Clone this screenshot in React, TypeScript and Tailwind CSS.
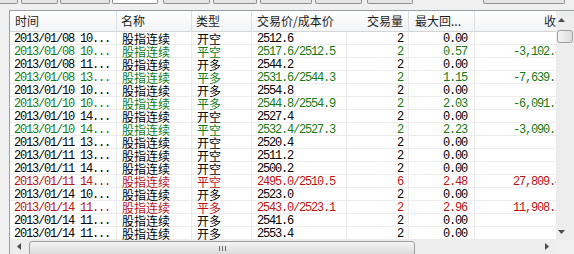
import React from 'react';

type Tone = 'k' | 'g' | 'r';

interface Trade {
  t: string;
  kind: string;
  price: string;
  vol: string;
  dd: string;
  pnl: string;
  c: Tone;
}

const trades: Trade[] = [
  { t: '2013/01/08 10...', kind: '开空', price: '2512.6', vol: '2', dd: '0.00', pnl: '', c: 'k' },
  { t: '2013/01/08 10...', kind: '平空', price: '2517.6/2512.5', vol: '2', dd: '0.57', pnl: '-3,102.40', c: 'g' },
  { t: '2013/01/08 11...', kind: '开多', price: '2544.2', vol: '2', dd: '0.00', pnl: '', c: 'k' },
  { t: '2013/01/08 13...', kind: '平多', price: '2531.6/2544.3', vol: '2', dd: '1.15', pnl: '-7,639.20', c: 'g' },
  { t: '2013/01/10 10...', kind: '开多', price: '2554.8', vol: '2', dd: '0.00', pnl: '', c: 'k' },
  { t: '2013/01/10 10...', kind: '平多', price: '2544.8/2554.9', vol: '2', dd: '2.03', pnl: '-6,091.60', c: 'g' },
  { t: '2013/01/10 14...', kind: '开空', price: '2527.4', vol: '2', dd: '0.00', pnl: '', c: 'k' },
  { t: '2013/01/10 14...', kind: '平空', price: '2532.4/2527.3', vol: '2', dd: '2.23', pnl: '-3,090.80', c: 'g' },
  { t: '2013/01/11 13...', kind: '开空', price: '2520.4', vol: '2', dd: '0.00', pnl: '', c: 'k' },
  { t: '2013/01/11 13...', kind: '开空', price: '2511.2', vol: '2', dd: '0.00', pnl: '', c: 'k' },
  { t: '2013/01/11 14...', kind: '开空', price: '2500.2', vol: '2', dd: '0.00', pnl: '', c: 'k' },
  { t: '2013/01/11 14...', kind: '平空', price: '2495.0/2510.5', vol: '6', dd: '2.48', pnl: '27,809.40', c: 'r' },
  { t: '2013/01/14 10...', kind: '开多', price: '2523.0', vol: '2', dd: '0.00', pnl: '', c: 'k' },
  { t: '2013/01/14 11...', kind: '平多', price: '2543.0/2523.1', vol: '2', dd: '2.96', pnl: '11,908.20', c: 'r' },
  { t: '2013/01/14 11...', kind: '开多', price: '2541.6', vol: '2', dd: '0.00', pnl: '', c: 'k' },
  { t: '2013/01/14 11...', kind: '开多', price: '2553.4', vol: '2', dd: '0.00', pnl: '', c: 'k' },
];

const toneClass: Record<Tone, string> = {
  k: 'text-black',
  g: 'text-[#147a14]',
  r: 'text-[#b81414]',
};

const mono = "font-['Liberation_Mono',monospace] text-[12px] tracking-[-1.2px] leading-[12px]";
const cjk = "font-['Noto_Sans_CJK_SC',sans-serif] text-[12px] leading-[12px]";

function Arrow({ dir }: { dir: 'up' | 'down' | 'left' | 'right' }) {
  const pts = {
    up: '0,4 7,4 3.5,0',
    down: '0,0 7,0 3.5,4',
    left: '4,0 4,7 0,3.5',
    right: '0,0 0,7 4,3.5',
  }[dir];
  const vert = dir === 'up' || dir === 'down';
  return (
    <svg width={vert ? 7 : 4} height={vert ? 4 : 7} viewBox={vert ? '0 0 7 4' : '0 0 4 7'}>
      <polygon points={pts} fill="#4d4d4d" />
    </svg>
  );
}

function TabStrip() {
  return (
    <div className="flex h-[4px]">
      <div className="w-[18px] h-[4px] border-r border-b border-[#8e8f8f] bg-[#e4e4e4] rounded-br-[2px]" />
      <div className="ml-[3px] w-[37px] h-[4px] border-x border-b border-[#8e8f8f] bg-[#e4e4e4] rounded-b-[2px]" />
      <div className="ml-[2px] w-[50px] h-[4px] border-x border-b border-[#8e8f8f] bg-[#e4e4e4] rounded-b-[2px]" />
      <div className="ml-[2px] w-[46px] h-[4px] border-x border-b border-[#8e8f8f] bg-white rounded-b-[2px]" />
      <div className="ml-[5px] w-[47px] h-[4px] border-x border-b border-[#8e8f8f] bg-[#e4e4e4] rounded-b-[2px]" />
      <div className="ml-[3px] w-[44px] h-[4px] border-x border-b border-[#8e8f8f] bg-[#e4e4e4] rounded-b-[2px]" />
      <div className="ml-[3px] w-[52px] h-[4px] border-x border-b border-[#8e8f8f] bg-[#e4e4e4] rounded-b-[2px]" />
      <div className="ml-[3px] w-[47px] h-[4px] border-x border-b border-[#8e8f8f] bg-[#e4e4e4] rounded-b-[2px]" />
      <div className="ml-[5px] w-[46px] h-[4px] border-x border-b border-[#8e8f8f] bg-[#e4e4e4] rounded-b-[2px]" />
      <div className="ml-[70px] w-[82px] h-[4px] border-x border-b border-[#8e8f8f] bg-[#e4e4e4] rounded-b-[2px]" />
    </div>
  );
}

function Header() {
  const cell = "flex items-center border-r border-[#dcdfe3] shrink-0";
  return (
    <div className={`flex h-[21px] border-b border-[#d5d5d5] bg-linear-to-b from-white to-[#f3f4f6] text-[#1e1e1e] ${cjk}`}>
      <div className={`${cell} w-[107px] pl-[5px]`}>时间</div>
      <div className={`${cell} w-[75px] pl-[4px]`}>名称</div>
      <div className={`${cell} w-[60px] pl-[4px]`}>类型</div>
      <div className="flex items-center shrink-0 w-[95px] pl-[5px]">交易价/成本价</div>
      <div className={`${cell} w-[62px] justify-end pr-[5px]`}>交易量</div>
      <div className={`${cell} w-[66px] pl-[6px]`}>最大回...</div>
      <div className="flex items-center shrink-0 w-[99px] justify-end pr-[6px]">收益</div>
    </div>
  );
}

function TradeRow({ r }: { r: Trade }) {
  const cell = "flex items-center pt-[2px] border-r border-[#ececec] shrink-0 whitespace-nowrap";
  return (
    <div className={`flex h-[13px] border-b border-[#ececec] ${toneClass[r.c]}`}>
      <div className={`${cell} w-[107px] pl-[4px] ${mono}`}>{r.t}</div>
      <div className={`${cell} w-[75px] pl-[5px] ${cjk}`}>股指连续</div>
      <div className={`${cell} w-[60px] pl-[5px] ${cjk}`}>{r.kind}</div>
      <div className={`${cell} w-[95px] pl-[5px] ${mono}`}>{r.price}</div>
      <div className={`${cell} w-[62px] justify-end pr-[5px] ${mono}`}>{r.vol}</div>
      <div className={`${cell} w-[66px] justify-end pr-[7px] ${mono}`}>{r.dd}</div>
      <div className={`${cell} w-[99px] justify-end pr-[6px] ${mono}`}>{r.pnl}</div>
    </div>
  );
}

function VScroll() {
  return (
    <div className="w-[18px] h-[229px] bg-[#ededed] flex flex-col shrink-0">
      <div className="h-[17px] flex items-center pl-[2px]">
        <Arrow dir="up" />
      </div>
      <div className="mt-[2px] ml-[1px] w-[16px] h-[13px] rounded-[3px] border border-[#9d9d9d] bg-linear-to-r from-[#f5f5f5] to-[#dcdcdc]" />
      <div className="flex-1" />
      <div className="h-[17px] flex items-center pl-[2px]">
        <Arrow dir="down" />
      </div>
    </div>
  );
}

function HScroll() {
  return (
    <div className="w-[546px] h-[17px] bg-[#ededed] flex items-stretch shrink-0">
      <div className="w-[17px] flex items-center pl-[7px] pb-[4px]">
        <Arrow dir="left" />
      </div>
      <div className="ml-[2px] mt-[1px] w-[386px] h-[15px] rounded-[3px] border border-[#9d9d9d] bg-linear-to-b from-[#f5f5f5] to-[#d9d9d9] flex items-start justify-center pt-[4px] gap-[2px]">
        <div className="w-[1px] h-[5px] bg-[#6a6a6a]" />
        <div className="w-[1px] h-[5px] bg-[#6a6a6a]" />
        <div className="w-[1px] h-[5px] bg-[#6a6a6a]" />
      </div>
      <div className="flex-1" />
      <div className="w-[17px] flex items-center pl-[6px] pb-[4px]">
        <Arrow dir="right" />
      </div>
    </div>
  );
}

export default function App() {
  return (
    <div className="w-[574px] h-[254px] bg-[#f0f0f0] overflow-hidden">
      <TabStrip />
      <div className="mt-[6px] ml-[9px] border-l border-t border-[#9a9ea6] bg-white">
        <div className="flex">
          <div className="w-[546px] h-[229px] overflow-hidden shrink-0">
            <div className="w-[564px]">
              <Header />
              {trades.map((r, i) => (
                <TradeRow key={i} r={r} />
              ))}
            </div>
          </div>
          <VScroll />
        </div>
        <div className="flex">
          <HScroll />
          <div className="w-[18px] h-[17px] bg-[#f0f0f0]" />
        </div>
      </div>
    </div>
  );
}
